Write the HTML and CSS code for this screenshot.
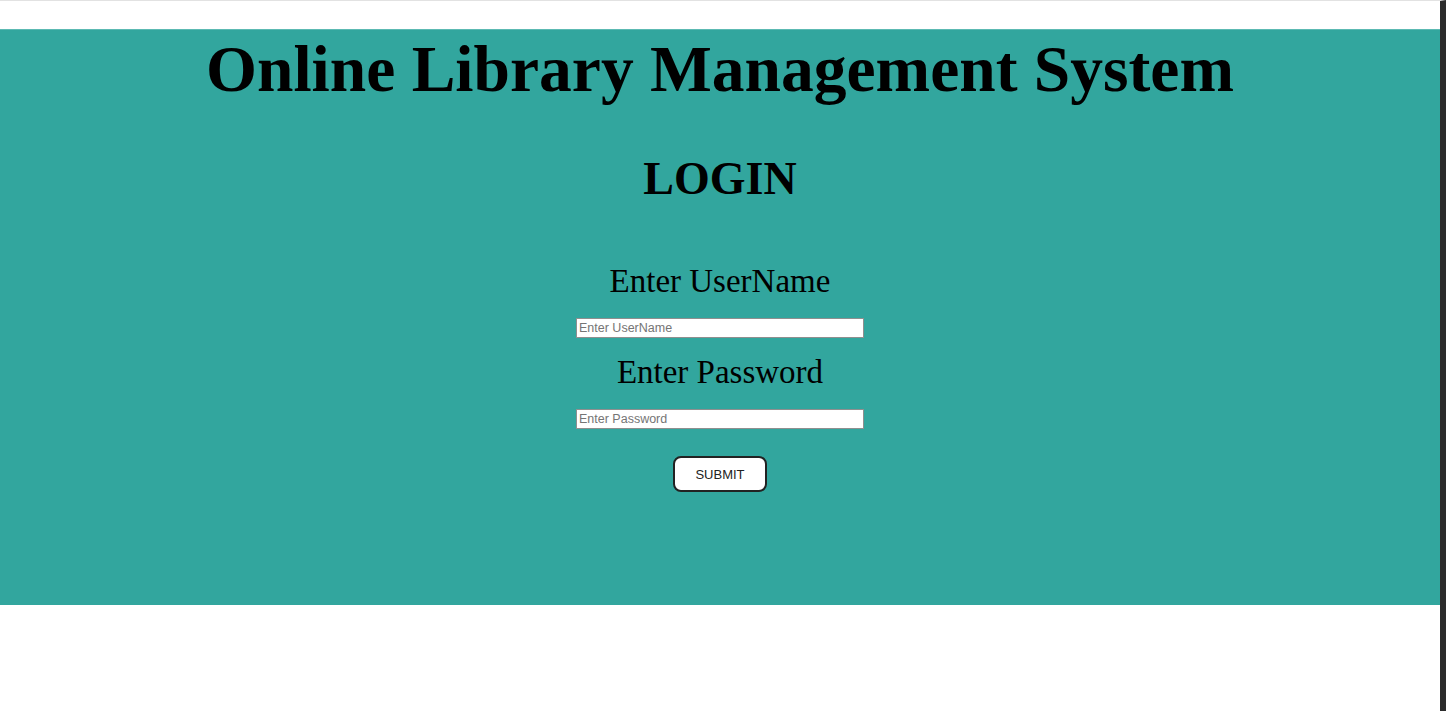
FILE: index.html
```html
<!DOCTYPE html>
<html>
<head>
<meta charset="utf-8">
<title>Online Library Management System</title>
<link rel="stylesheet" href="styles.css">
</head>
<body>
<div class="page">
  <div class="topgap"></div>
  <section class="band">
    <h1 class="title">Online Library Management System</h1>
    <h2 class="login">LOGIN</h2>
    <form class="form">
      <label class="label" for="u">Enter UserName</label>
      <input class="field" id="u" type="text" placeholder="Enter UserName">
      <label class="label" for="p">Enter Password</label>
      <input class="field" id="p" type="password" placeholder="Enter Password">
      <button class="submit" type="button">SUBMIT</button>
    </form>
  </section>
</div>
</body>
</html>
```
FILE: styles.css
```css
html, body {
  margin: 0;
  padding: 0;
  height: 100%;
}
body {
  background: #ffffff;
  font-family: "Liberation Serif", "Times New Roman", serif;
  border-top: 1px solid #e2e2e2;
  border-right: 6px solid #2b2b2b;
  box-sizing: border-box;
  overflow: hidden;
}
.topgap {
  height: 28px;
}
.band {
  background: #32a69e;
  border-top: 1px solid #5cbab3;
  height: 576px;
  box-sizing: border-box;
  text-align: center;
  color: #000;
}
.title {
  margin: 0;
  font-size: 65.5px;
  font-weight: bold;
  line-height: 78px;
}
.login {
  margin: 41px 0 0;
  font-size: 46px;
  font-weight: bold;
  line-height: 60px;
}
.form {
  display: flex;
  flex-direction: column;
  align-items: center;
  margin-top: 52px;
}
.label {
  font-size: 33px;
  line-height: 40px;
  margin-bottom: 17px;
}
.field {
  width: 288px;
  height: 20px;
  box-sizing: border-box;
  border: 1px solid #8f8f8f;
  padding: 0 2px;
  font-family: "Liberation Sans", Arial, sans-serif;
  font-size: 12.5px;
  margin-bottom: 14px;
  background: #fff;
}
.field::placeholder {
  color: #757575;
}
.submit {
  margin-top: 13px;
  width: 94px;
  height: 36px;
  background: #fff;
  border: 2px solid #222;
  border-radius: 8px;
  font-family: "Liberation Sans", Arial, sans-serif;
  font-size: 13px;
  color: #222;
}
```
